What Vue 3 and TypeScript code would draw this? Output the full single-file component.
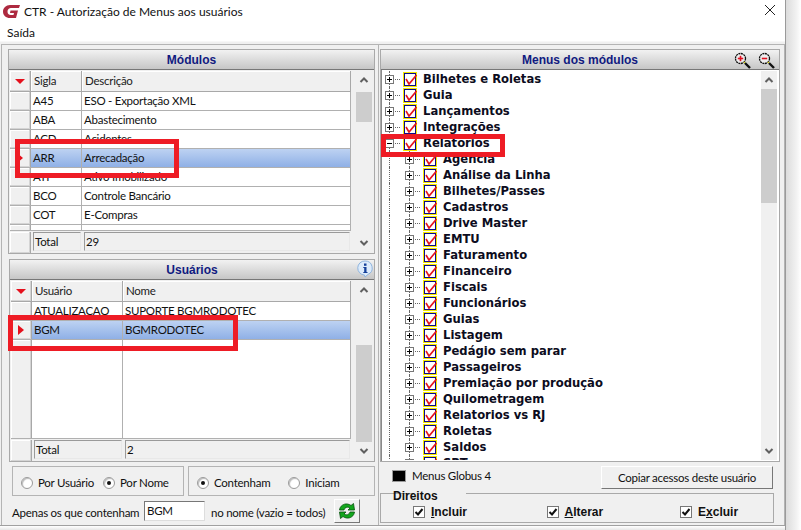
<script setup lang="ts">
interface Grid {
  title: string
  kind: string
  heads: [string, string]
  rows: { a: string; b: string; sel?: boolean }[]
  total: string
}
const grids: Grid[] = [
  {
    title: 'Módulos', kind: 'mod', heads: ['Sigla', 'Descrição'], total: '29',
    rows: [
      { a: 'A45', b: 'ESO - Exportação XML' },
      { a: 'ABA', b: 'Abastecimento' },
      { a: 'ACD', b: 'Acidentes' },
      { a: 'ARR', b: 'Arrecadação', sel: true },
      { a: 'ATF', b: 'Ativo Imobilizado' },
      { a: 'BCO', b: 'Controle Bancário' },
      { a: 'COT', b: 'E-Compras' },
      { a: '', b: '' }
    ]
  },
  {
    title: 'Usuários', kind: 'usr', heads: ['Usuário', 'Nome'], total: '2',
    rows: [
      { a: 'ATUALIZACAO', b: 'SUPORTE BGMRODOTEC' },
      { a: 'BGM', b: 'BGMRODOTEC', sel: true }
    ]
  }
]
const top = ['Bilhetes e Roletas', 'Guia', 'Lançamentos', 'Integrações']
const children = ['Agência', 'Análise da Linha', 'Bilhetes/Passes', 'Cadastros', 'Drive Master', 'EMTU', 'Faturamento', 'Financeiro', 'Fiscais', 'Funcionários', 'Guias', 'Listagem', 'Pedágio sem parar', 'Passageiros', 'Premiação por produção', 'Quilometragem', 'Relatorios vs RJ', 'Roletas', 'Saldos', 'SRT']
const rights = [
  { pre: '', key: 'I', post: 'ncluir' },
  { pre: '', key: 'A', post: 'lterar' },
  { pre: 'E', key: 'x', post: 'cluir' }
]
</script>

<template>
  <div class="screen">
    <div class="window">
      <header class="titlebar">
        <svg class="logo" width="17" height="13" viewBox="0 0 17 13">
          <path d="M17 0 L7 0 C3 0 0 3 0 6.500 C0 10.500 3 13 7 13 L13 13 L15 5.500 L7.500 5.500 L7 8 L11 8 L10.500 10 L8 10 C5.500 10 4.500 8.500 4.500 6.500 C4.500 4.500 6 3 8 3 L16 3 Z" fill="#ad2a40" />
        </svg>
        <span class="title-text">CTR - Autorização de Menus aos usuários</span>
        <svg class="close" width="12" height="12" viewBox="0 0 12 12">
          <path d="M1 1 L11 11 M11 1 L1 11" stroke="#222" stroke-width="1" fill="none" />
        </svg>
      </header>
      <nav class="menubar">Saída</nav>

      <main class="client">
        <section class="left">
          <div v-for="g in grids" :key="g.title" class="panel" :class="'panel-' + g.kind">
            <div class="panel-title">
              {{ g.title }}
              <svg v-if="g.kind === 'usr'" class="info" width="16" height="18" viewBox="0 0 16 18">
                <path d="M8 1 A7 7 0 0 1 11 14.400 L8 17 L7.500 15 A7 7 0 0 1 8 1 Z" fill="#dcebfb" stroke="#8fb4de" />
                <rect x="7" y="3.500" width="2.500" height="2.300" fill="#14409a" />
                <path d="M6.300 7 H9.500 V12 H10.500 V13 H6.300 V12 H7.200 V8 H6.300 Z" fill="#14409a" />
              </svg>
            </div>
            <div class="grid-wrap">
              <div class="grid">
                <div class="row head" :class="g.kind">
                  <div class="ind ind-head"><i class="tri-down"></i></div>
                  <div class="hcell">{{ g.heads[0] }}</div>
                  <div class="hcell">{{ g.heads[1] }}</div>
                </div>
                <div class="rows">
                  <div v-for="r in g.rows" :key="r.a" class="row data" :class="[g.kind, { sel: r.sel }]">
                    <div class="ind"><i v-if="r.sel" class="tri-right"></i></div>
                    <div class="cell">{{ r.a }}</div>
                    <div class="cell">{{ r.b }}</div>
                  </div>
                  <div class="row filler" :class="g.kind">
                    <div class="ind"></div>
                    <div class="cell"></div>
                    <div class="cell"></div>
                  </div>
                </div>
                <div class="row foot" :class="g.kind">
                  <div class="ind"></div>
                  <div class="fcell">Total</div>
                  <div class="fcell">{{ g.total }}</div>
                </div>
              </div>
              <div class="scroll" :class="'scroll-' + g.kind">
                <svg class="arrow" width="10" height="8" viewBox="0 0 10 8"><path d="M1.500 6 L5 2.500 L8.500 6" fill="none" stroke="#606060" stroke-width="2" /></svg>
                <div class="track"><div class="thumb"></div></div>
                <svg class="arrow" width="10" height="8" viewBox="0 0 10 8"><path d="M1.500 2 L5 5.500 L8.500 2" fill="none" stroke="#606060" stroke-width="2" /></svg>
              </div>
            </div>
          </div>

          <div class="options">
            <div class="optbox box-a">
              <label class="radio-item"><i class="radio"></i>Por Usuário</label>
              <label class="radio-item"><i class="radio on"></i>Por Nome</label>
            </div>
            <div class="optbox box-b">
              <label class="radio-item"><i class="radio on"></i>Contenham</label>
              <label class="radio-item"><i class="radio"></i>Iniciam</label>
            </div>
          </div>
          <div class="filter">
            <span class="filter-text">Apenas os que contenham</span>
            <span class="input">BGM</span>
            <span class="after">no nome (vazio = todos)</span>
            <button class="refresh">
              <svg width="18" height="18" viewBox="0 0 18 18">
                <path d="M1.500 8 C2 4 5.500 1.500 9.500 2 C11 2.200 12 2.800 13 3.500 L15.500 1.500 L16.500 8 L10 8 L12 6 C10 4.500 6.800 5 6 8 Z" fill="#12a61c" stroke="#05500c" stroke-width="0.800" />
                <path d="M16.500 10 C16 14 12.500 16.500 8.500 16 C7 15.800 6 15.200 5 14.500 L2.500 16.500 L1.500 10 L8 10 L6 12 C8 13.500 11.200 13 12 10 Z" fill="#12a61c" stroke="#05500c" stroke-width="0.800" />
              </svg>
            </button>
          </div>
        </section>

        <section class="right">
          <div class="panel panel-menu">
            <div class="panel-title">
              Menus dos módulos
              <span class="zooms">
                <svg v-for="z in ['plus', 'minus']" :key="z" width="18" height="18" viewBox="0 0 18 18">
                  <circle cx="6.500" cy="6.500" r="5" fill="#eee" stroke="#111" stroke-width="1.300" stroke-dasharray="2 0.600" />
                  <path d="M3.800 6.500 H9.200" stroke="#e01020" stroke-width="1.600" />
                  <path v-if="z === 'plus'" d="M6.500 3.800 V9.200" stroke="#e01020" stroke-width="1.600" />
                  <path d="M10 10 L11 11" stroke="#e8e020" stroke-width="1.600" />
                  <path d="M11 11 L16 16" stroke="#111" stroke-width="2.400" />
                </svg>
              </span>
            </div>
            <div class="tree-wrap">
              <div class="tree">
                <div v-for="t in top" :key="t" class="node">
                  <span class="exp"><svg class="box" width="9" height="9" viewBox="0 0 9 9"><rect x="0.500" y="0.500" width="8" height="8" fill="#fff" stroke="#777" /><path d="M2 4.500 H7 M4.500 2 V7" stroke="#000" /></svg></span>
                  <svg class="check" width="14" height="15" viewBox="0 0 14 15"><rect x="0.500" y="0.500" width="13" height="14" fill="#fff" stroke="#f5e800" /><rect x="1.500" y="1.500" width="11" height="12" fill="none" stroke="#0a0a8a" /><path d="M3 7 L6 12 L13.500 3" fill="none" stroke="#e5141e" stroke-width="1.600" /></svg>
                  <span class="label">{{ t }}</span>
                </div>
                <div class="node">
                  <span class="exp"><svg class="box" width="9" height="9" viewBox="0 0 9 9"><rect x="0.500" y="0.500" width="8" height="8" fill="#fff" stroke="#777" /><path d="M2 4.500 H7" stroke="#000" /></svg></span>
                  <svg class="check" width="14" height="15" viewBox="0 0 14 15"><rect x="0.500" y="0.500" width="13" height="14" fill="#fff" stroke="#f5e800" /><rect x="1.500" y="1.500" width="11" height="12" fill="none" stroke="#0a0a8a" /><path d="M3 7 L6 12 L13.500 3" fill="none" stroke="#e5141e" stroke-width="1.600" /></svg>
                  <span class="label">Relatórios</span>
                </div>
                <div v-for="c in children" :key="c" class="node child">
                  <span class="indent"></span>
                  <span class="exp"><svg class="box" width="9" height="9" viewBox="0 0 9 9"><rect x="0.500" y="0.500" width="8" height="8" fill="#fff" stroke="#777" /><path d="M2 4.500 H7 M4.500 2 V7" stroke="#000" /></svg></span>
                  <svg class="check" width="14" height="15" viewBox="0 0 14 15"><rect x="0.500" y="0.500" width="13" height="14" fill="#fff" stroke="#f5e800" /><rect x="1.500" y="1.500" width="11" height="12" fill="none" stroke="#0a0a8a" /><path d="M3 7 L6 12 L13.500 3" fill="none" stroke="#e5141e" stroke-width="1.600" /></svg>
                  <span class="label">{{ c }}</span>
                </div>
              </div>
              <div class="scroll scroll-menu">
                <svg class="arrow" width="10" height="8" viewBox="0 0 10 8"><path d="M1.500 6 L5 2.500 L8.500 6" fill="none" stroke="#606060" stroke-width="2" /></svg>
                <div class="track"><div class="thumb"></div></div>
                <svg class="arrow" width="10" height="8" viewBox="0 0 10 8"><path d="M1.500 2 L5 5.500 L8.500 2" fill="none" stroke="#606060" stroke-width="2" /></svg>
              </div>
            </div>
          </div>

          <div class="actions">
            <i class="swatch"></i>
            <span class="swatch-label">Menus Globus 4</span>
            <button class="copy">Copiar acessos deste usuário</button>
          </div>
          <fieldset class="rights">
            <legend>Direitos</legend>
            <label v-for="r in rights" :key="r.post" class="right-item">
              <i class="cb"><svg width="10" height="10" viewBox="0 0 10 10"><path d="M1.500 5 L4 7.500 L8.500 2" fill="none" stroke="#111" stroke-width="2" /></svg></i>
              <span>{{ r.pre }}<u>{{ r.key }}</u>{{ r.post }}</span>
            </label>
          </fieldset>
        </section>
      </main>
      <div class="bottom"></div>
    </div>
    <div class="shadow"></div>

    <div class="mark mark-a"></div>
    <div class="mark mark-b"></div>
    <div class="mark mark-c"></div>
  </div>
</template>

<style>
html, body { margin: 0; background: #fff; }
</style>

<style scoped>
.screen {
  position: relative;
  width: 801px;
  height: 530px;
  display: flex;
  overflow: hidden;
  background: #fff;
  font-family: Lato, "Liberation Sans", sans-serif;
  font-size: 11.500px;
  letter-spacing: -0.250px;
  color: #111;
}
.window { width: 785px; display: flex; flex-direction: column; flex: none; }
.shadow {
  flex: 1;
  border-left: 1px solid #9a9a9a;
  background: linear-gradient(90deg, #dcdcdc, #f2f2f2 70%, #fff);
}
.titlebar { height: 22px; display: flex; align-items: center; flex: none; position: relative; padding-left: 3px; }
.logo { flex: none; margin-right: 4px; margin-top: 1px; }
.title-text { font-size: 12px; letter-spacing: 0; }
.close { margin-left: auto; margin-right: 9px; margin-top: -2px; }
.menubar { height: 19px; line-height: 21px; padding-left: 7px; flex: none; font-size: 12px; letter-spacing: 0; }
.client {
  flex: none;
  height: 484px;
  display: flex;
  background: #f0f0f0;
  border-top: 1px solid #f7f7f7;
  box-sizing: border-box;
  padding-top: 2px;
}
.left {
  width: 378px;
  margin-left: 1px;
  flex: none;
  box-sizing: border-box;
  border: 1px solid #b4b4b4;
  border-bottom: none;
  padding: 4px 3px 0 6px;
  display: flex;
  flex-direction: column;
}
.right {
  flex: 1;
  min-width: 0;
  box-sizing: border-box;
  border: 1px solid #b4b4b4;
  border-left: none;
  border-bottom: none;
  padding: 4px 4px 0 1px;
  display: flex;
  flex-direction: column;
}
.panel { box-sizing: border-box; border: 1px solid #a9a9a9; display: flex; flex-direction: column; flex: none; background: #f0f0f0; }
.panel-mod { height: 205px; margin-bottom: 5px; }
.panel-usr { height: 203px; margin-left: 1px; }
.panel-menu { height: 413px; }
.panel-title {
  height: 20px;
  flex: none;
  box-sizing: border-box;
  border-bottom: 1px solid #777;
  background: linear-gradient(#f2f2f2, #c6c6c6);
  color: #101a80;
  font-family: "Liberation Sans", sans-serif;
  font-size: 12px;
  letter-spacing: 0;
  font-weight: bold;
  text-align: center;
  line-height: 20px;
  position: relative;
}
.info { position: absolute; right: 1px; top: 0; }
.zooms { position: absolute; right: 3px; top: 2px; display: flex; gap: 6px; }
.grid-wrap { flex: 1; min-height: 0; display: flex; padding: 1px; gap: 5px; }
.grid { flex: 1; min-width: 0; display: flex; flex-direction: column; }
.rows { flex: 1; min-height: 0; display: flex; flex-direction: column; overflow: hidden; background: #fff; }
.row { display: grid; flex: none; }
.mod { grid-template-columns: 21px 51px 1fr; }
.usr { grid-template-columns: 21px 91px 1fr; }
.head { height: 21px; background: #f0f0f0; }
.data { height: 19px; box-sizing: border-box; border-bottom: 1px solid #b0b0b0; }
.filler { flex: 1 0 0; }
.foot { height: 22px; margin-top: -1px; background: #f0f0f0; border-top: 1px solid #b0b0b0; box-sizing: border-box; padding-top: 1px; }
.ind {
  background: #f0f0f0;
  box-sizing: border-box;
  border-right: 1px solid #a8a8a8;
  box-shadow: inset -1px -1px 0 #d4d4d4, inset 1px 1px 0 #fff;
  display: flex;
  align-items: center;
  justify-content: center;
}
.ind-head { border-bottom: 1px solid #a8a8a8; }
.hcell {
  box-sizing: border-box;
  padding-left: 3px;
  line-height: 20px;
  background: #f0f0f0;
  border-right: 1px solid #a8a8a8;
  border-bottom: 1px solid #a8a8a8;
  box-shadow: inset 1px 1px 0 #fff;
  color: #222;
}
.cell {
  box-sizing: border-box;
  padding-left: 2px;
  line-height: 18px;
  border-right: 1px solid #b0b0b0;
  white-space: nowrap;
  overflow: hidden;
}
.fcell {
  box-sizing: border-box;
  margin: 0 1px 2px 2px;
  padding-left: 1px;
  line-height: 17px;
  background: #f0f0f0;
  border: 1px solid;
  border-color: #9a9a9a #e8e8e8 #e8e8e8 #9a9a9a;
}
.sel { background: linear-gradient(#bdd2f2, #8fb0e6); }
.tri-down { width: 0; height: 0; border-left: 5px solid transparent; border-right: 5px solid transparent; border-top: 5px solid #e5101c; }
.tri-right { width: 0; height: 0; border-top: 5px solid transparent; border-bottom: 5px solid transparent; border-left: 6px solid #e5101c; }
.scroll { width: 16px; flex: none; display: flex; flex-direction: column; align-items: center; background: #f0f0f0; }
.arrow { flex: none; margin: 5px 0; }
.track { flex: 1; min-height: 0; width: 100%; display: flex; flex-direction: column; }
.thumb { background: #cdcdcd; width: 100%; flex: none; }
.scroll-mod { margin: 0 1px 0 0; }
.scroll-mod .track { padding-top: 3px; }
.scroll-mod .thumb { height: 30px; }
.scroll-usr { margin: 0 1px 0 0; }
.scroll-usr .track { justify-content: flex-end; }
.scroll-usr .thumb { height: 97px; }
.scroll-menu { height: 100%; background: #f0f0f0; }
.scroll-menu .thumb { height: 114px; }
.options { display: flex; gap: 4px; margin: 4px 0 0 4px; flex: none; }
.optbox {
  height: 30px;
  box-sizing: border-box;
  border: 1px solid #b4b4b4;
  padding-top: 3px;
  display: flex;
  align-items: center;
}
.box-a { width: 172px; padding-left: 8px; gap: 9px; }
.box-b { width: 187px; padding-left: 8px; gap: 18px; }
.radio-item { display: flex; align-items: center; gap: 5px; white-space: nowrap; }
.radio {
  width: 12px;
  height: 12px;
  box-sizing: border-box;
  border-radius: 50%;
  border: 1px solid #9a9a9a;
  background: #fff;
  box-shadow: inset 1px 1px 1px #bbb;
  display: flex;
  align-items: center;
  justify-content: center;
}
.radio.on::after { content: ""; width: 4px; height: 4px; border-radius: 50%; background: #111; }
.filter { display: flex; align-items: center; height: 24px; margin: 3px 0 0 4px; flex: none; }
.filter-text { white-space: nowrap; width: 126px; flex: none; padding-top: 3px; }
.input {
  width: 61px;
  height: 20px;
  box-sizing: border-box;
  margin-left: 6px;
  padding-left: 2px;
  line-height: 17px;
  background: #fff;
  border: 1px solid;
  border-color: #777 #ddd #ddd #777;
  flex: none;
}
.after { margin-left: 6px; white-space: nowrap; width: 114px; flex: none; padding-top: 3px; }
.refresh {
  width: 26px;
  height: 24px;
  margin-left: 9px;
  padding: 0;
  box-sizing: border-box;
  background: #f0f0f0;
  border: 1px solid;
  border-color: #fff #777 #777 #fff;
  display: flex;
  align-items: center;
  justify-content: center;
  flex: none;
}
.tree-wrap { flex: 1; min-height: 0; display: flex; padding: 1px 2px 1px 1px; background: #fff; border-left: 1px solid #8a8a8a; }
.tree { flex: 1; min-width: 0; overflow: hidden; background: #fff; }
.node { height: 16px; display: flex; align-items: center; }
.indent { width: 20px; flex: none; align-self: stretch; margin-left: 6px; border-left: 1px dotted #666; margin-right: -26px; box-sizing: border-box; }
.exp {
  width: 16px;
  height: 16px;
  flex: none;
  margin-left: 2px;
  margin-right: 2px;
  display: flex;
  align-items: center;
  background-image: linear-gradient(90deg, #666 50%, transparent 50%);
  background-size: 2px 1px;
  background-repeat: repeat-x;
  background-position: 4px 8px;
  position: relative;
}
.exp::before {
  content: "";
  position: absolute;
  left: 4px;
  top: 0;
  bottom: 0;
  border-left: 1px dotted #666;
}
.child .exp { margin-left: 22px; }
.box { position: relative; flex: none; }
.check { flex: none; }
.label {
  margin-left: 6px;
  font-family: "DejaVu Sans", sans-serif;
  font-weight: bold;
  font-size: 11.600px;
  letter-spacing: 0;
  white-space: nowrap;
  color: #0c0c20;
}
.actions { display: flex; align-items: center; height: 31px; flex: none; padding-left: 12px; }
.swatch { width: 14px; height: 12px; background: #000; flex: none; border: 1px solid #999; box-sizing: border-box; margin-top: -4px; }
.swatch-label { margin-left: 6px; margin-top: -4px; }
.copy {
  margin-left: auto;
  margin-right: 7px;
  width: 172px;
  height: 23px;
  box-sizing: border-box;
  background: #f0f0f0;
  border: 1px solid;
  border-color: #fff #777 #777 #fff;
  padding: 0;
  font-family: inherit;
  font-size: 11.500px;
  letter-spacing: -0.250px;
  color: #111;
}
.rights {
  margin: -7px 0 0 0;
  width: 394px;
  min-inline-size: 0;
  height: 37px;
  box-sizing: border-box;
  border: 1px solid #a9a9a9;
  border-radius: 0;
  padding: 5px 0 0 32px;
  display: flex;
  font-family: "Liberation Sans", sans-serif;
  font-size: 12px;
  letter-spacing: 0;
  font-weight: bold;
}
.rights legend { padding: 0 4px; position: relative; left: -24px; top: 3px; }
.right-item { display: flex; align-items: center; gap: 6px; width: 133.500px; flex: none; }
.cb {
  width: 12px;
  height: 12px;
  box-sizing: border-box;
  border: 1px solid #777;
  background: #fff;
  display: flex;
  align-items: center;
  justify-content: center;
}
.bottom { flex: 1; border-top: 1px solid #a0a0a0; background: linear-gradient(#fff, #e6e6e6); }
.mark { position: absolute; box-sizing: border-box; border: 5px solid #ee1c25; }
.mark-a { left: 15px; top: 139px; width: 164px; height: 39px; }
.mark-b { left: 8px; top: 315px; width: 230px; height: 36px; }
.mark-c { left: 381px; top: 134px; width: 124px; height: 23px; }
</style>
